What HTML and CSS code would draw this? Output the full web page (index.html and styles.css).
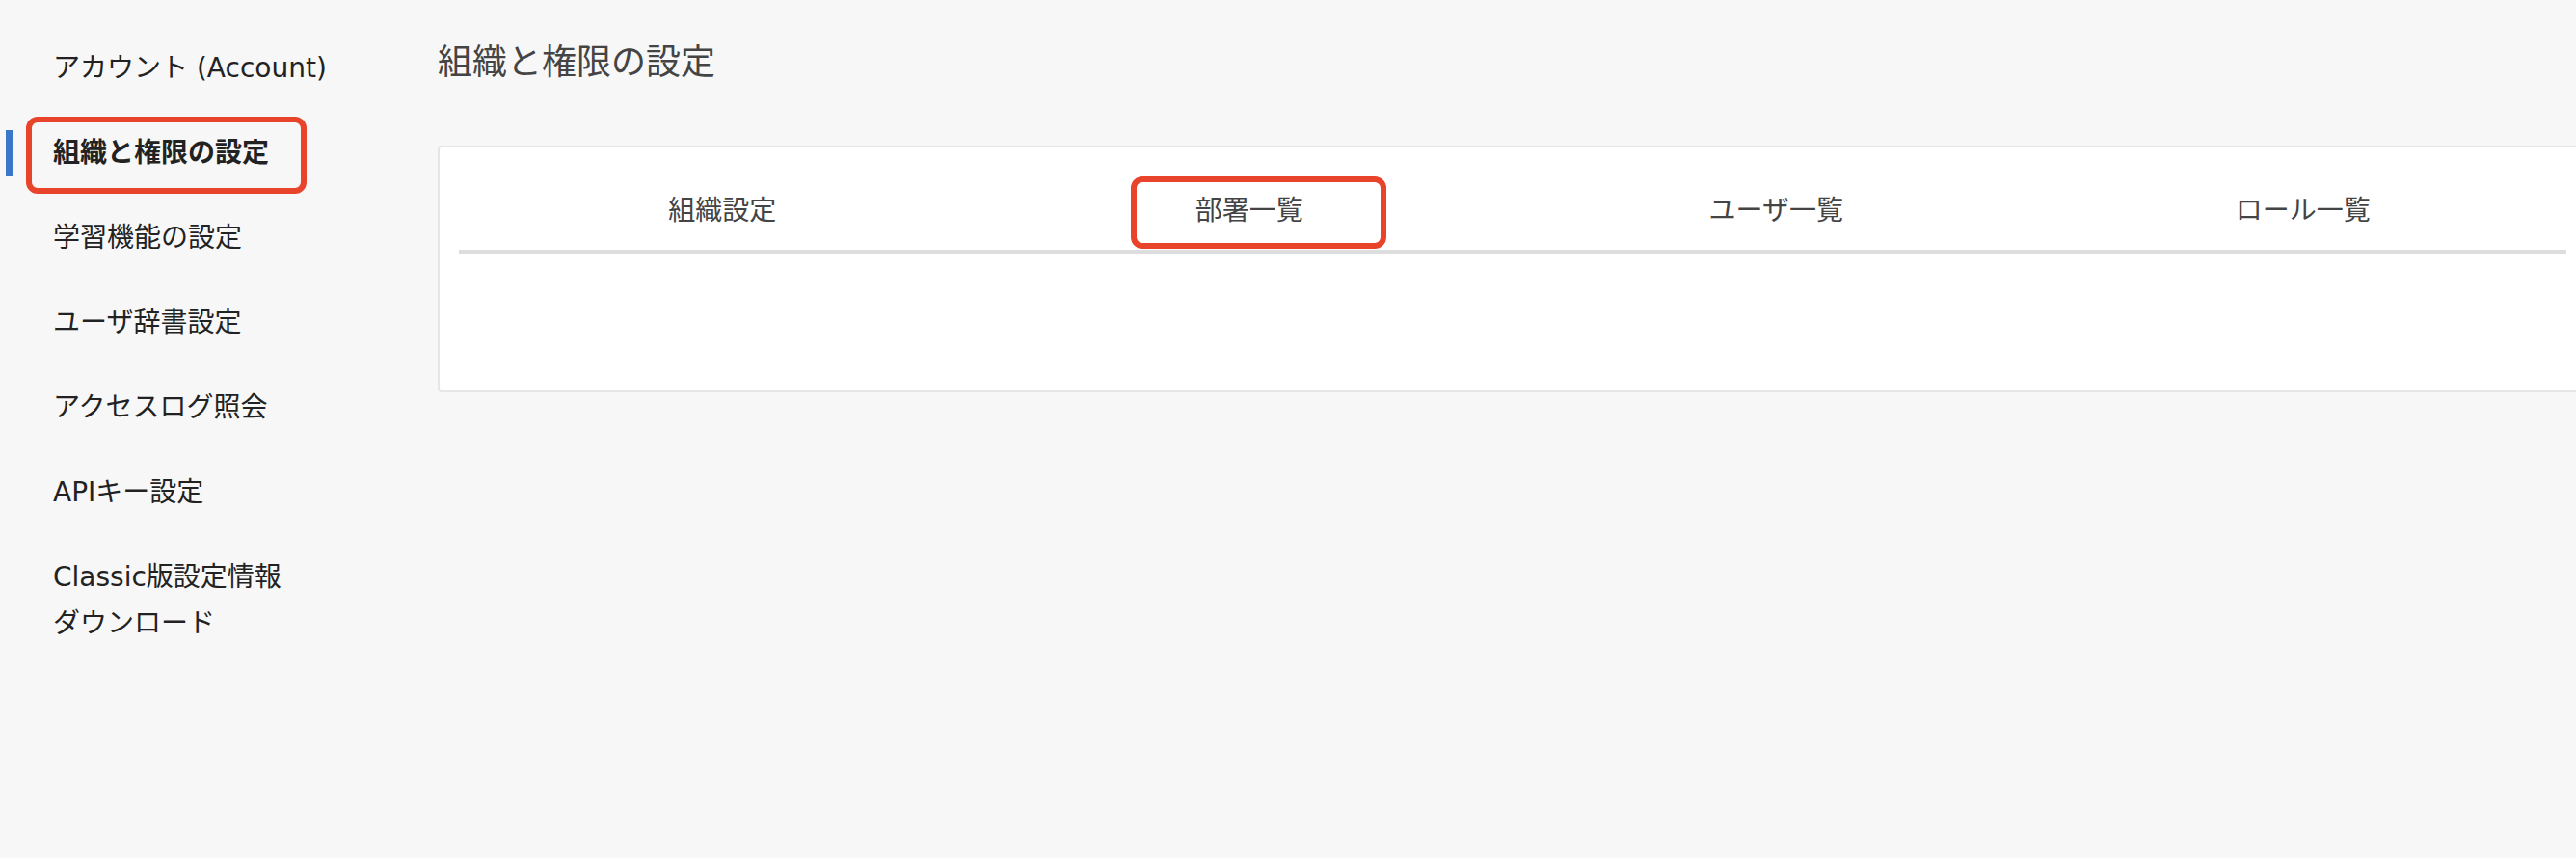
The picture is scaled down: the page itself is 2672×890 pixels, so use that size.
FILE: index.html
```html
<!DOCTYPE html>
<html lang="ja">
<head>
    <meta charset="UTF-8">
    <meta name="viewport" content="width=device-width, initial-scale=1.0">
    <title>組織と権限の設定</title>
    <link rel="stylesheet" href="styles.css">
</head>
<body>
    <div class="layout">
        <!-- Side navigation -->
        <nav class="sidebar">
            <ul class="nav-list">
                <li class="nav-item">アカウント (Account)</li>
                <li class="nav-item active">
                    組織と権限の設定
                    <span class="mark mark-nav"></span>
                </li>
                <li class="nav-item">学習機能の設定</li>
                <li class="nav-item">ユーザ辞書設定</li>
                <li class="nav-item">アクセスログ照会</li>
                <li class="nav-item">APIキー設定</li>
                <li class="nav-item">Classic版設定情報<br>ダウンロード</li>
            </ul>
        </nav>

        <main class="main">
            <h1 class="page-title">組織と権限の設定</h1>

            <div class="card">
                <div class="tabs">
                    <div class="tab"><span class="tab-label">組織設定</span></div>
                    <div class="tab active">
                        <span class="tab-label">部署一覧<span class="mark mark-tab"></span></span>
                    </div>
                    <div class="tab"><span class="tab-label">ユーザ一覧</span></div>
                    <div class="tab"><span class="tab-label">ロール一覧</span></div>
                </div>
                <div class="tab-panel"></div>
            </div>
        </main>
    </div>
</body>
</html>
```

FILE: styles.css
```css
* {
    margin: 0;
    padding: 0;
    box-sizing: border-box;
}

body {
    background: #f7f7f7;
    font-family: "DejaVu Sans", "Noto Sans CJK JP", sans-serif;
    color: #222;
    overflow: hidden;
}

.layout {
    display: flex;
    min-height: 890px;
}

/* Sidebar */
.sidebar {
    width: 454px;
    flex-shrink: 0;
    padding-top: 47px;
}

.nav-list {
    list-style: none;
    padding-left: 6px;
}

.nav-item {
    position: relative;
    font-size: 28px;
    line-height: 48px;
    padding-left: 41px;
    border-left: 8px solid transparent;
    margin-bottom: 40px;
    color: #222;
}

.nav-item.active {
    border-left-color: #3a76c9;
    font-weight: bold;
}

/* Red annotation outlines */
.mark {
    position: absolute;
    border: 6px solid #e8432b;
    border-radius: 12px;
    pointer-events: none;
}

.mark-nav {
    left: 13px;
    top: -14px;
    width: 291px;
    height: 80px;
}

.mark-tab {
    left: -67px;
    top: -12px;
    width: 265px;
    height: 75px;
}

/* Main */
.main {
    flex: 1;
    padding-top: 41px;
}

.page-title {
    font-size: 36px;
    line-height: 48px;
    font-weight: normal;
    color: #444;
    margin-bottom: 62px;
}

.card {
    width: 2230px;
    background: white;
    border: 2px solid #e6e6e6;
    border-radius: 4px;
    padding: 20px;
}

.tabs {
    display: flex;
    border-bottom: 4px solid #dddddd;
}

.tab {
    flex: 1;
    text-align: center;
    padding: 22px 0 16px;
    font-size: 28px;
    line-height: 48px;
    color: #444;
}

.tab-label {
    position: relative;
    display: inline-block;
}

.tab-panel {
    height: 122px;
}
```
